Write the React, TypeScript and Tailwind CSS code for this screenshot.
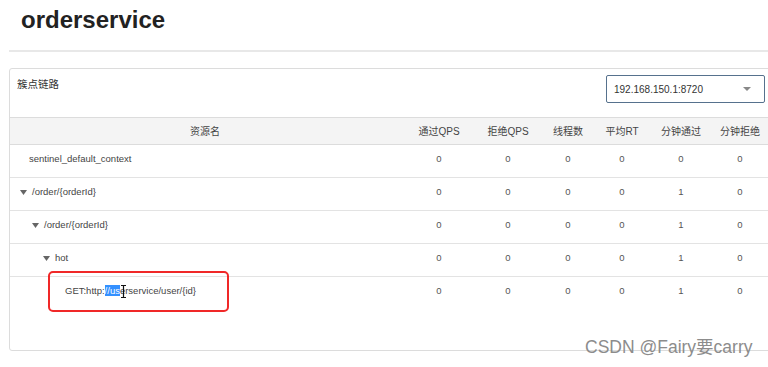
import React from "react";

type Row = {
  label: string;
  pad: string;
  toggle: boolean;
  values: number[];
  marked?: boolean;
};

const rows: Row[] = [
  { label: "sentinel_default_context", pad: "pl-[19px]", toggle: false, values: [0, 0, 0, 0, 0, 0] },
  { label: "/order/{orderId}", pad: "pl-[10px]", toggle: true, values: [0, 0, 0, 0, 1, 0] },
  { label: "/order/{orderId}", pad: "pl-[22px]", toggle: true, values: [0, 0, 0, 0, 1, 0] },
  { label: "hot", pad: "pl-[33px]", toggle: true, values: [0, 0, 0, 0, 1, 0] },
  { label: "GET:http://userservice/user/{id}", pad: "pl-[55px]", toggle: false, values: [0, 0, 0, 0, 1, 0], marked: true },
];

const headers = ["通过QPS", "拒绝QPS", "线程数", "平均RT", "分钟通过", "分钟拒绝"];

const grid = "grid grid-cols-[390px_78px_60px_60px_48px_70px_48px]";

function Caret() {
  return (
    <svg width="7" height="5" viewBox="0 0 7 5" className="shrink-0">
      <path d="M0 0H7L3.5 5Z" fill="#666" />
    </svg>
  );
}

function SelectedLabel() {
  // the row text shows a partial selection "//us" with the text cursor on top
  return (
    <span className="relative">
      GET:http:<span className="bg-[#3390ff] text-white">//us</span>erservice/user/{"{id}"}
      <svg width="5" height="13" viewBox="0 0 5 13" className="absolute left-[56px] top-[1px]">
        <path d="M0 0.5H5M2.5 0.5V12.5M0 12.5H5" stroke="#111" strokeWidth="1.2" fill="none" />
      </svg>
    </span>
  );
}

export default function App() {
  return (
    <div className="relative w-[768px] h-[367px] overflow-hidden bg-white font-['Liberation_Sans','Noto_Sans_CJK_SC',sans-serif]">
      <h1 className="pl-[21px] pt-[6px] text-[24px] leading-[28px] font-bold text-[#222]">orderservice</h1>
      <div className="ml-[9px] mt-[16px] border-t-2 border-[#e8e8e8]" />

      <div className="ml-[9px] mt-[16px] w-[770px] h-[283px] border border-[#dcdcdc] rounded-[3px]">
        <div className="flex justify-between h-[48px] pl-[7px] pr-[13px]">
          <div className="pt-[8px] text-[10.5px] leading-[14px] text-[#333]">簇点链路</div>
          <div className="mt-[6px] w-[159px] h-[28px] flex items-center justify-between pl-[7px] pr-[13px] border border-[#56718d] rounded-[2px] text-[10px] text-[#333]">
            <span>192.168.150.1:8720</span>
            <svg width="8" height="4" viewBox="0 0 8 4">
              <path d="M0 0H8L4 4Z" fill="#888" />
            </svg>
          </div>
        </div>

        <div className={`${grid} h-[28px] items-center bg-[#f4f4f4] border-t border-b border-[#dcdcdc] text-[10px] text-[#444] text-center`}>
          <div>资源名</div>
          {headers.map((h) => (
            <div key={h}>{h}</div>
          ))}
        </div>

        {rows.map((r, i) => (
          <div
            key={i}
            className={`${grid} items-start h-[33px] pt-[7px] text-[9.5px] leading-[14px] text-[#444] ${i < rows.length - 1 ? "border-b border-[#e3e3e3]" : ""}`}
          >
            <div className={`flex items-center h-[14px] gap-[5px] ${r.pad}`}>
              {r.toggle && <Caret />}
              {r.marked ? <SelectedLabel /> : <span>{r.label}</span>}
            </div>
            {r.values.map((v, j) => (
              <div key={j} className="text-center text-[#555]">
                {v}
              </div>
            ))}
          </div>
        ))}
      </div>

      <div className="absolute left-[48px] top-[271px] w-[181px] h-[41px] border-2 border-[#f02828] rounded-[5px]" />

      <div className="absolute left-[585px] top-[336px] text-[17.5px] leading-[22px] text-[#8c8c8c]">
        CSDN @Fairy要carry
      </div>
    </div>
  );
}
